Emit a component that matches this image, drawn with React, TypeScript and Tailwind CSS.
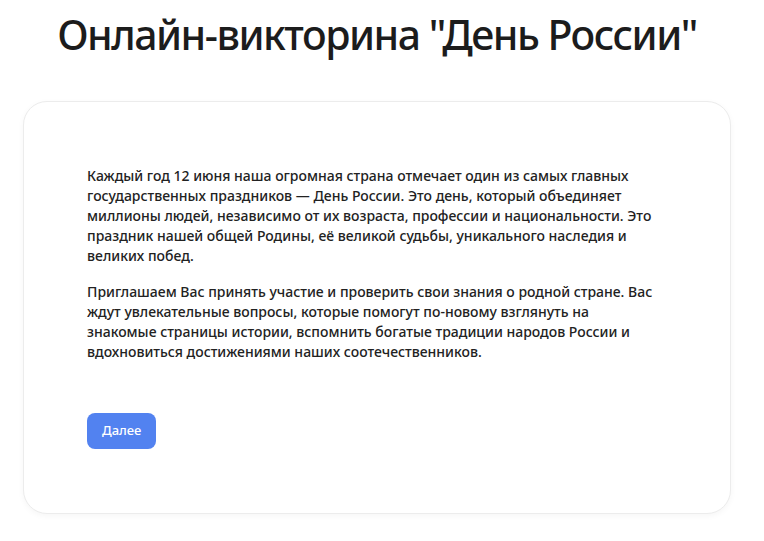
import React from "react";

const paragraphs = [
  [
    "Каждый год 12 июня наша огромная страна отмечает один из самых главных",
    "государственных праздников — День России. Это день, который объединяет",
    "миллионы людей, независимо от их возраста, профессии и национальности. Это",
    "праздник нашей общей Родины, её великой судьбы, уникального наследия и",
    "великих побед.",
  ],
  [
    "Приглашаем Вас принять участие и проверить свои знания о родной стране. Вас",
    "ждут увлекательные вопросы, которые помогут по-новому взглянуть на",
    "знакомые страницы истории, вспомнить богатые традиции народов России и",
    "вдохновиться достижениями наших соотечественников.",
  ],
];

export default function App() {
  return (
    <main className="min-h-screen bg-white font-['Noto_Sans',sans-serif] text-[#222]">
      <div className="ml-[23px] w-[708px]">
        <h1 className="pt-[6px] text-center text-[41px] font-medium leading-[56px] tracking-[-1.5px] text-[#1c1c1c]">
          Онлайн-викторина "День России"
        </h1>
        <section className="mt-[39px] rounded-[24px] border border-[#ececec] bg-white py-16 pr-16 pl-[63px] shadow-[0_2px_6px_rgba(0,0,0,0.04)]">
          <div className="flex flex-col gap-4 text-[14px] font-medium leading-[20px]">
            {paragraphs.map((lines, i) => (
              <p key={i}>
                {lines.map((line, j) => (
                  <span key={j} className="block whitespace-nowrap">
                    {line}
                  </span>
                ))}
              </p>
            ))}
          </div>
          <button className="mt-[51px] h-9 rounded-lg bg-[#5282f0] px-[15px] text-[13px] font-medium text-white">
            Далее
          </button>
        </section>
      </div>
    </main>
  );
}
